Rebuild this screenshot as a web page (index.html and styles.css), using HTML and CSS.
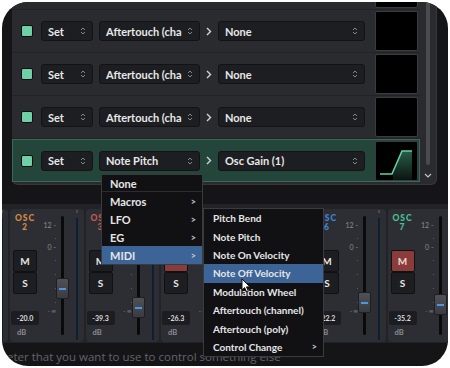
FILE: index.html
```html
<!DOCTYPE html>
<html lang="en">
<head>
    <meta charset="UTF-8">
    <meta name="viewport" content="width=device-width, initial-scale=1.0">
    <title>Modulation Matrix</title>
    <link rel="stylesheet" href="styles.css">
</head>
<body>

<div class="frame">

    <div class="mod-panel">
        <div class="mod-rows">
            <!-- row scrolled mostly out of view -->
            <div class="mod-row partial">
                <div class="preview"></div>
            </div>
            <div class="mod-row">
                <div class="check"></div>
                <div class="select select-op"><span>Set</span><svg class="updown" width="6" height="10" viewBox="0 0 6 10"><path d="M1 4 L3 2 L5 4 M1 6 L3 8 L5 6"/></svg></div>
                <div class="select select-src"><span>Aftertouch (cha</span><svg class="updown" width="6" height="10" viewBox="0 0 6 10"><path d="M1 4 L3 2 L5 4 M1 6 L3 8 L5 6"/></svg></div>
                <div class="route-arrow"><svg width="6" height="9" viewBox="0 0 6 9"><path d="M1 1 L4.5 4.5 L1 8"/></svg></div>
                <div class="select select-dst"><span>None</span><svg class="updown" width="6" height="10" viewBox="0 0 6 10"><path d="M1 4 L3 2 L5 4 M1 6 L3 8 L5 6"/></svg></div>
                <div class="preview"></div>
            </div>
            <div class="mod-row">
                <div class="check"></div>
                <div class="select select-op"><span>Set</span><svg class="updown" width="6" height="10" viewBox="0 0 6 10"><path d="M1 4 L3 2 L5 4 M1 6 L3 8 L5 6"/></svg></div>
                <div class="select select-src"><span>Aftertouch (cha</span><svg class="updown" width="6" height="10" viewBox="0 0 6 10"><path d="M1 4 L3 2 L5 4 M1 6 L3 8 L5 6"/></svg></div>
                <div class="route-arrow"><svg width="6" height="9" viewBox="0 0 6 9"><path d="M1 1 L4.5 4.5 L1 8"/></svg></div>
                <div class="select select-dst"><span>None</span><svg class="updown" width="6" height="10" viewBox="0 0 6 10"><path d="M1 4 L3 2 L5 4 M1 6 L3 8 L5 6"/></svg></div>
                <div class="preview"></div>
            </div>
            <div class="mod-row">
                <div class="check"></div>
                <div class="select select-op"><span>Set</span><svg class="updown" width="6" height="10" viewBox="0 0 6 10"><path d="M1 4 L3 2 L5 4 M1 6 L3 8 L5 6"/></svg></div>
                <div class="select select-src"><span>Aftertouch (cha</span><svg class="updown" width="6" height="10" viewBox="0 0 6 10"><path d="M1 4 L3 2 L5 4 M1 6 L3 8 L5 6"/></svg></div>
                <div class="route-arrow"><svg width="6" height="9" viewBox="0 0 6 9"><path d="M1 1 L4.5 4.5 L1 8"/></svg></div>
                <div class="select select-dst"><span>None</span><svg class="updown" width="6" height="10" viewBox="0 0 6 10"><path d="M1 4 L3 2 L5 4 M1 6 L3 8 L5 6"/></svg></div>
                <div class="preview"></div>
            </div>
            <div class="mod-row active">
                <div class="check"></div>
                <div class="select select-op"><span>Set</span><svg class="updown" width="6" height="10" viewBox="0 0 6 10"><path d="M1 4 L3 2 L5 4 M1 6 L3 8 L5 6"/></svg></div>
                <div class="select select-src"><span>Note Pitch</span><svg class="updown" width="6" height="10" viewBox="0 0 6 10"><path d="M1 4 L3 2 L5 4 M1 6 L3 8 L5 6"/></svg></div>
                <div class="route-arrow"><svg width="6" height="9" viewBox="0 0 6 9"><path d="M1 1 L4.5 4.5 L1 8"/></svg></div>
                <div class="select select-dst"><span>Osc Gain (1)</span><svg class="updown" width="6" height="10" viewBox="0 0 6 10"><path d="M1 4 L3 2 L5 4 M1 6 L3 8 L5 6"/></svg></div>
                <div class="preview">
                    <svg width="41" height="38" viewBox="0 0 41 38">
                        <defs>
                            <linearGradient id="curveFill" x1="0" y1="0" x2="0" y2="1">
                                <stop offset="0" stop-color="#2a5c49"/>
                                <stop offset="1" stop-color="#0a1511"/>
                            </linearGradient>
                        </defs>
                        <polygon points="17,32 26,9 36,9 36,38 17,38" fill="url(#curveFill)"/>
                        <polyline points="4,32 16,32 26,9 36,9" fill="none" stroke="#62d1a4" stroke-width="1.6"/>
                    </svg>
                </div>
            </div>
        </div>
        <div class="mod-scroll">
            <div class="scroll-track"></div>
            <svg class="scroll-down" width="8" height="5" viewBox="0 0 8 5"><path d="M1 1 L4 4 L7 1"/></svg>
        </div>
    </div>

    <div class="mod-gap"></div>

    <div class="mixer">
        <!-- strip 1 is scrolled off to the left -->
        <div class="strip strip-offscreen">
            <div class="meter-col"><div class="meter-dot"></div><div class="meter"></div></div>
        </div>
        <div class="strip">
            <div class="strip-main">
                <div class="osc-label osc-orange">OSC<br>2</div>
                <div class="ms"><div class="btn">M</div><div class="btn">S</div></div>
                <div class="value">-20.0</div>
                <div class="db">dB</div>
            </div>
            <div class="scale"><span class="tick">12 -</span><i></i><span class="tick">0 -</span><i></i><i></i><i></i><i></i><span class="tick inf">- ∞</span></div>
            <div class="fader"><div class="track"></div><div class="thumb" style="top: 69px"></div></div>
            <div class="meter-col"><div class="meter-dot"></div><div class="meter"></div></div>
        </div>
        <div class="strip">
            <div class="strip-main">
                <div class="osc-label osc-red">OSC<br>3</div>
                <div class="ms"><div class="btn">M</div><div class="btn">S</div></div>
                <div class="value">-39.3</div>
                <div class="db">dB</div>
            </div>
            <div class="scale"><span class="tick">12 -</span><i></i><span class="tick">0 -</span><i></i><i></i><i></i><i></i><span class="tick inf">- ∞</span></div>
            <div class="fader"><div class="track"></div><div class="thumb" style="top: 88px"></div></div>
            <div class="meter-col"><div class="meter-dot"></div><div class="meter"></div></div>
        </div>
        <div class="strip">
            <div class="strip-main">
                <div class="osc-label osc-orange">OSC<br>4</div>
                <div class="ms"><div class="btn btn-muted">M</div><div class="btn">S</div></div>
                <div class="value">-26.3</div>
                <div class="db">dB</div>
            </div>
            <div class="scale"><span class="tick">12 -</span><i></i><span class="tick">0 -</span><i></i><i></i><i></i><i></i><span class="tick inf">- ∞</span></div>
            <div class="fader"><div class="track"></div><div class="thumb" style="top: 84px"></div></div>
            <div class="meter-col"><div class="meter-dot"></div><div class="meter"></div></div>
        </div>
        <div class="strip">
            <div class="strip-main">
                <div class="osc-label osc-blue">OSC<br>5</div>
                <div class="ms"><div class="btn">M</div><div class="btn">S</div></div>
                <div class="value">-18.4</div>
                <div class="db">dB</div>
            </div>
            <div class="scale"><span class="tick">12 -</span><i></i><span class="tick">0 -</span><i></i><i></i><i></i><i></i><span class="tick inf">- ∞</span></div>
            <div class="fader"><div class="track"></div><div class="thumb" style="top: 80px"></div></div>
            <div class="meter-col"><div class="meter-dot"></div><div class="meter"></div></div>
        </div>
        <div class="strip">
            <div class="strip-main">
                <div class="osc-label osc-blue">OSC<br>6</div>
                <div class="ms"><div class="btn">M</div><div class="btn">S</div></div>
                <div class="value">-22.2</div>
                <div class="db">dB</div>
            </div>
            <div class="scale"><span class="tick">12 -</span><i></i><span class="tick">0 -</span><i></i><i></i><i></i><i></i><span class="tick inf">- ∞</span></div>
            <div class="fader"><div class="track"></div><div class="thumb" style="top: 83px"></div></div>
            <div class="meter-col"><div class="meter-dot"></div><div class="meter"></div></div>
        </div>
        <div class="strip">
            <div class="strip-main">
                <div class="osc-label osc-green">OSC<br>7</div>
                <div class="ms"><div class="btn btn-muted">M</div><div class="btn">S</div></div>
                <div class="value">-35.2</div>
                <div class="db">dB</div>
            </div>
            <div class="scale"><span class="tick">12 -</span><i></i><span class="tick">0 -</span><i></i><i></i><i></i><i></i><span class="tick inf">- ∞</span></div>
            <div class="fader"><div class="track"></div><div class="thumb" style="top: 85px"></div></div>
            <div class="meter-col"><div class="meter-dot"></div><div class="meter"></div></div>
        </div>
    </div>

    <div class="hint">eter that you want to use to control something else</div>

    <div class="menu menu-main">
        <div class="menu-item first">None</div>
        <div class="menu-sep"></div>
        <div class="menu-item">Macros<span class="more">&gt;</span></div>
        <div class="menu-item">LFO<span class="more">&gt;</span></div>
        <div class="menu-item">EG<span class="more">&gt;</span></div>
        <div class="menu-item hl">MIDI<span class="more">&gt;</span></div>
    </div>

    <div class="menu menu-sub">
        <div class="menu-item">Pitch Bend</div>
        <div class="menu-item">Note Pitch</div>
        <div class="menu-item">Note On Velocity</div>
        <div class="menu-item hl">Note Off Velocity</div>
        <div class="menu-item">Modulation Wheel</div>
        <div class="menu-item">Aftertouch (channel)</div>
        <div class="menu-item">Aftertouch (poly)</div>
        <div class="menu-item">Control Change<span class="more">&gt;</span></div>
    </div>

    <svg class="cursor" width="11" height="15" viewBox="0 0 11 15">
        <path d="M1 1 L1 12 L3.6 9.6 L5.6 14 L7.4 13.2 L5.5 8.9 L9 8.9 Z"/>
    </svg>
</div>

</body>
</html>
```

FILE: styles.css
```css
* {
    box-sizing: border-box;
}

body {
    margin: 0;
    background-color: #fff;
    font-family: Lato, "Open Sans", sans-serif;
}

.frame {
    position: relative;
    width: 446px;
    height: 364px;
    margin: 2px;
    border-radius: 26px;
    overflow: hidden;
    background-color: #151517;
    display: flex;
    flex-direction: column;
}

/* modulation rows */

.mod-panel {
    display: flex;
    flex-shrink: 0;
    margin-left: 10px;
    width: 425px;
    height: 183px;
    background-color: #2a2b2f;
    border-right: 1px solid #36373b;
    border-bottom: 1px solid #36373b;
    border-radius: 0 0 6px 6px;
}

.mod-rows {
    width: 408px;
    display: flex;
    flex-direction: column;
}

.mod-row {
    height: 43px;
    flex-shrink: 0;
    display: flex;
    align-items: center;
    padding: 0 2px 0 9px;
    border-bottom: 1px solid #222326;
}

.mod-row.partial {
    margin-top: -35px;
    justify-content: flex-end;
}

.mod-row.active {
    background-color: #23453a;
    border: 1px solid #3a6a57;
    padding-left: 8px;
    padding-right: 1px;
}

.check {
    width: 12px;
    height: 12px;
    flex-shrink: 0;
    background-color: #6fd0a7;
    border: 1px solid #0c0c0e;
    border-radius: 2px;
}

.select {
    height: 20px;
    flex-shrink: 0;
    display: flex;
    align-items: center;
    justify-content: space-between;
    padding: 0 6px 0 6px;
    background-color: #1d1e21;
    border: 1px solid #131315;
    border-radius: 3px;
    color: #e8e8e8;
    font-size: 11px;
    font-weight: 700;
    white-space: nowrap;
    overflow: hidden;
}

.select-op {
    width: 52px;
    margin-left: 8px;
}

.select-src {
    width: 101px;
    margin-left: 6px;
}

.select-dst {
    width: 147px;
}

.updown path {
    fill: none;
    stroke: #85868a;
    stroke-width: 1;
}

.route-arrow {
    width: 18px;
    display: flex;
    justify-content: center;
}

.route-arrow path {
    fill: none;
    stroke: #d4d4d6;
    stroke-width: 1.4;
}

.preview {
    width: 43px;
    height: 40px;
    margin-left: 10px;
    flex-shrink: 0;
    background-color: #000;
    border: 1px solid #3a3b3f;
    border-radius: 2px;
}

.preview svg {
    display: block;
}

.mod-scroll {
    width: 16px;
    display: flex;
    flex-direction: column;
    align-items: center;
}

.scroll-track {
    width: 4px;
    height: 163px;
    background-color: #4a4b4f;
    border-radius: 2px;
}

.scroll-down {
    margin-top: 8px;
}

.scroll-down path {
    fill: none;
    stroke: #c4c4c6;
    stroke-width: 1.2;
}

.mod-gap {
    height: 19px;
    flex-shrink: 0;
}

/* mixer */

.mixer {
    height: 139px;
    flex-shrink: 0;
    display: flex;
    gap: 2px;
    margin-left: -67.5px;
    padding-top: 5px;
    background-color: #222327;
}

.strip {
    width: 73.5px;
    height: 133px;
    flex-shrink: 0;
    display: flex;
    padding-left: 1px;
    background-color: #2d2e34;
    border-radius: 4px;
}

.strip-offscreen {
    justify-content: flex-end;
    padding-right: 5.5px;
}

.strip-main {
    width: 28px;
    display: flex;
    flex-direction: column;
    align-items: center;
    padding-top: 4.5px;
}

.osc-label {
    font-size: 8.5px;
    font-weight: 900;
    line-height: 9px;
    letter-spacing: 1px;
    text-align: center;
}

.osc-orange { color: #d68a46; }
.osc-red { color: #c65a4b; }
.osc-blue { color: #3f86d6; }
.osc-green { color: #48c192; }

.ms {
    margin-top: 18.5px;
    display: flex;
    flex-direction: column;
}

.btn {
    width: 24px;
    height: 22px;
    display: flex;
    align-items: center;
    justify-content: center;
    background-color: #1d1e21;
    border: 1px solid #111113;
    border-radius: 2px;
    color: #e6e6e6;
    font-size: 10px;
    font-weight: 700;
}

.btn-muted {
    background-color: #8a3c3a;
    color: #ecd6d4;
}

.value {
    margin-top: 17px;
    width: 28px;
    height: 14px;
    display: flex;
    align-items: center;
    justify-content: center;
    background-color: #1c1d20;
    border-radius: 2px;
    color: #dcdcde;
    font-size: 7px;
    font-weight: 700;
}

.db {
    align-self: flex-start;
    margin: 3px 0 0 6px;
    font-size: 7.5px;
    line-height: 10px;
    font-weight: 700;
    color: #8b8c90;
}

.scale {
    width: 17px;
    display: flex;
    flex-direction: column;
    align-items: flex-end;
    padding-top: 11px;
}

.tick {
    height: 10px;
    line-height: 10px;
    font-size: 7px;
    color: #8a8b8f;
    white-space: nowrap;
}

.scale i {
    width: 1px;
    height: 1px;
    margin-top: 13px;
    background-color: #5a5b60;
}

.scale .tick + i {
    margin-top: 8px;
}

.scale i + .tick {
    margin-top: 3px;
}

.tick.inf {
    margin-top: 11px;
    font-size: 6px;
}

.fader {
    position: relative;
    width: 13px;
}

.track {
    width: 3px;
    height: 119px;
    margin: 7px auto 0;
    background-color: #0a0a0b;
    border-radius: 2px;
}

.thumb {
    position: absolute;
    left: 0;
    width: 13px;
    height: 21px;
    background: linear-gradient(#505157, #3b3c41);
    border: 1px solid #1e1f22;
    border-radius: 2px;
}

.thumb::after {
    content: "";
    position: absolute;
    left: 2px;
    right: 2px;
    top: 9px;
    height: 2px;
    background-color: #4f95e6;
}

.meter-col {
    width: 2px;
    margin-left: 7px;
    display: flex;
    flex-direction: column;
}

.meter-dot {
    height: 3px;
    margin-top: 1px;
    background-color: #4a4b50;
}

.meter {
    height: 122px;
    margin-top: 5px;
    background-color: #0e1f31;
}

/* hint line */

.hint {
    flex: 1;
    padding: 6px 0 0 5px;
    font-family: "Open Sans", sans-serif;
    font-size: 11.5px;
    line-height: 16px;
    color: #636469;
    white-space: nowrap;
}

/* dropdown menus */

.menu {
    position: absolute;
    background-color: #111113;
    border: 1px solid #3a3b3f;
    color: #e6e6e8;
    font-size: 11px;
    font-weight: 700;
}

.menu-main {
    left: 99px;
    top: 172px;
    width: 102px;
}

.menu-sub {
    left: 201px;
    top: 206px;
    width: 121px;
    font-size: 10px;
}

.menu-item {
    height: 18px;
    display: flex;
    align-items: center;
    justify-content: space-between;
    padding: 0 6px 0 8px;
    white-space: nowrap;
}

.menu-item.first {
    height: 16px;
}

.menu-sub .menu-item {
    height: 18.4px;
    padding-left: 9px;
}

.menu-item.hl {
    background-color: #3d6496;
}

.menu-sep {
    height: 1px;
    background-color: #2c2d31;
}

.more {
    font-size: 9px;
    color: #c8c8ca;
}

.cursor {
    position: absolute;
    left: 239px;
    top: 276px;
}

.cursor path {
    fill: #fff;
    stroke: #111;
    stroke-width: 1;
}
```
